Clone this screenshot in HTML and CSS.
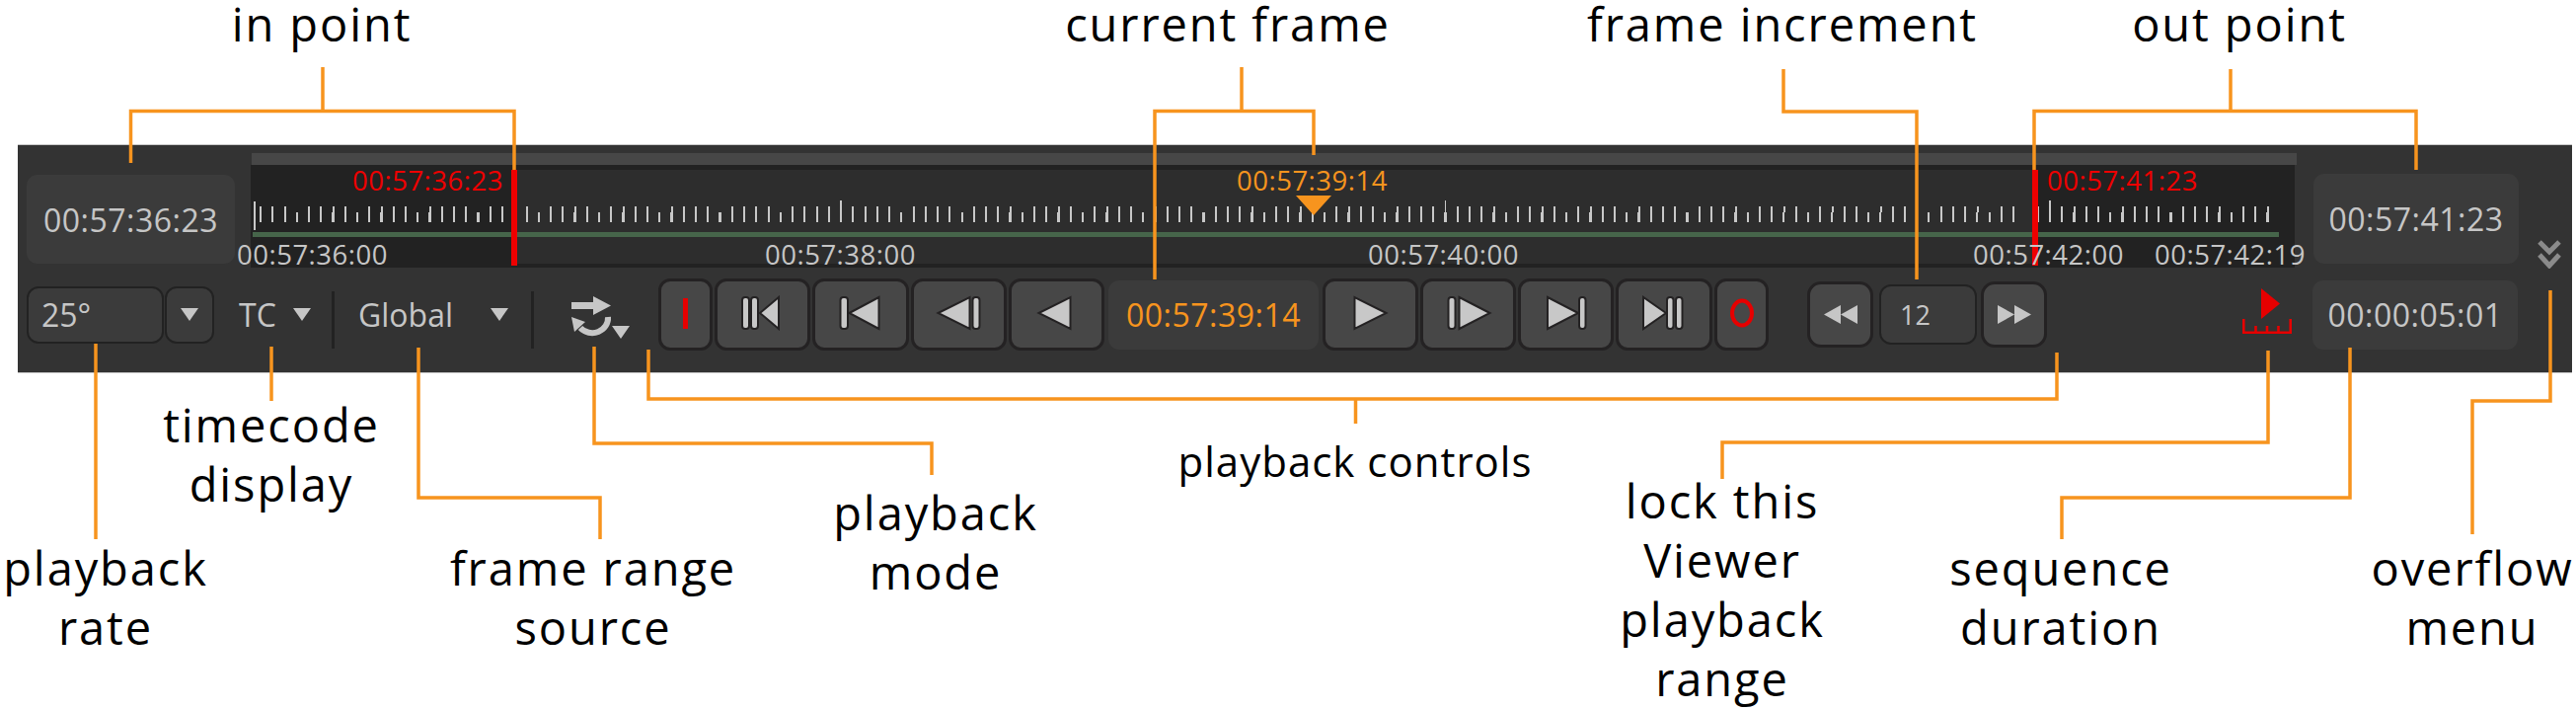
FILE: index.html
```html
<!DOCTYPE html>
<html lang="en">
<head>
<meta charset="utf-8">
<title>Viewer timeline controls</title>
<link rel="stylesheet" href="styles.css">
</head>
<body>
<div class="canvas">
  <div class="panel">
    <div class="top-row">
      <div class="tc-box in-box">00:57:36:23</div>
      <div class="timeline">
        <div class="scrub"></div>
        <div class="track">
          <div class="range"></div>
          <div class="first-tick"></div>
          <div class="ticks"></div>
          <div class="green"></div>
          <div class="bar in-bar"></div>
          <div class="bar out-bar"></div>
          <div class="playhead"></div>
          <span class="tl tl-top red t-in">00:57:36:23</span>
          <span class="tl tl-top red t-out">00:57:41:23</span>
          <span class="tl tl-top orange t-cur">00:57:39:14</span>
          <span class="tl tl-bot t-36">00:57:36:00</span>
          <span class="tl tl-bot t-38">00:57:38:00</span>
          <span class="tl tl-bot t-40">00:57:40:00</span>
          <span class="tl tl-bot t-42">00:57:42:00</span>
          <span class="tl tl-bot t-4219">00:57:42:19</span>
        </div>
      </div>
      <div class="tc-box out-box">00:57:41:23</div>
      <svg class="chevrons" width="24" height="29" viewBox="0 0 24 29"><path d="M2 2l10 10L22 2M2 15l10 11 10-11" fill="none" stroke="#8b8b8b" stroke-width="5"/></svg>
    </div>
    <div class="bottom-row">
      <div class="field rate">25°</div>
      <div class="field rate-drop"><i class="caret"></i></div>
      <span class="menu-text tc-text">TC</span>
      <i class="caret tc-caret"></i>
      <i class="sep sep-a"></i>
      <span class="menu-text global-text">Global</span>
      <i class="caret global-caret"></i>
      <i class="sep sep-b"></i>
      <svg class="loop" width="59" height="43" viewBox="0 0 59 43">
        <path d="M0 6h22V0l18 9.500L22 19v-6H0z" fill="#c6c6c6"/>
        <path d="M37 21A16 15 0 0 1 9 32" fill="none" stroke="#c6c6c6" stroke-width="6"/>
        <path d="M0 21l14 5-11 10zM41 30h18l-9 13z" fill="#c6c6c6"/>
      </svg>
      <div class="transport">
        <button class="btn btn-mark"><i class="i-mark"></i></button>
        <button class="btn"><svg class="icon" width="48" height="36" viewBox="0 0 48 36"><rect x="3" y="2" width="7" height="32" rx="3"/><rect x="12" y="2" width="7" height="32" rx="3"/><path d="M21 18L40 2v32z"/></svg></button>
        <button class="btn btn-98"><svg class="icon" width="48" height="36" viewBox="0 0 48 36"><rect x="3.500" y="2" width="7.500" height="32" rx="3"/><path d="M12.500 18L42.500 2v32z"/></svg></button>
        <button class="btn"><svg class="icon" width="48" height="36" viewBox="0 0 48 36"><path d="M2.500 18L34.500 2v32z"/><rect x="37.500" y="2" width="7" height="32" rx="3"/></svg></button>
        <button class="btn"><svg class="icon" width="48" height="36" viewBox="0 0 48 36"><path d="M5.500 18L37.500 2v32z"/></svg></button>
        <div class="tc-box cur-box orange">00:57:39:14</div>
        <button class="btn"><svg class="icon" width="48" height="36" viewBox="0 0 48 36"><path d="M39.500 18L7.500 2v32z"/></svg></button>
        <button class="btn"><svg class="icon" width="48" height="36" viewBox="0 0 48 36"><rect x="3.500" y="2" width="7" height="32" rx="3"/><path d="M45.500 18L14.500 2v32z"/></svg></button>
        <button class="btn"><svg class="icon" width="48" height="36" viewBox="0 0 48 36"><path d="M36 18L5 2v32z"/><rect x="37" y="2" width="6.500" height="32" rx="3"/></svg></button>
        <button class="btn btn-98"><svg class="icon" width="48" height="36" viewBox="0 0 48 36"><path d="M26 18L3 2v32z"/><rect x="27" y="2" width="6.500" height="32" rx="3"/><rect x="36" y="2" width="6.500" height="32" rx="3"/></svg></button>
        <button class="btn btn-mark"><svg class="o-mark" width="26" height="32" viewBox="0 0 26 32"><ellipse cx="13" cy="16" rx="10" ry="12.500" fill="none" stroke="#e60000" stroke-width="4"/></svg></button>
      </div>
      <button class="btn btn-skip rew"><svg width="34" height="19" viewBox="0 0 34 19"><path d="M0 9.500L17 0v19zM17 9.500L34 0v19z" fill="#c6c6c6"/></svg></button>
      <div class="field incr">12</div>
      <button class="btn btn-skip ff"><svg width="34" height="19" viewBox="0 0 34 19"><path d="M34 9.500L17 0v19zM17 9.500L0 0v19z" fill="#c6c6c6"/></svg></button>
      <svg class="lock" width="50" height="46" viewBox="0 0 50 46">
        <path d="M19 0l19 15.500L19 31z" fill="#e60000"/>
        <path d="M1.300 31v13.700h47.400V31M13.500 38v6M25 38v6M36.500 38v6" fill="none" stroke="#e60000" stroke-width="2.600"/>
      </svg>
      <div class="tc-box dur-box">00:00:05:01</div>
    </div>
  </div>

  <svg class="callouts" width="2610" height="719" viewBox="0 0 2610 719">
    <g fill="none" stroke="#f7941e" stroke-width="3.500">
      <path d="M132.500 165V112.500H521V172M327 68v44"/>
      <path d="M1170 283V112.500H1331V157M1258 68v44"/>
      <path d="M1807 70v43H1942V283"/>
      <path d="M2061 172V112.500H2448V172M2260 70v42"/>
      <path d="M97 348V546"/>
      <path d="M275 351V406"/>
      <path d="M424 352V504H608V546"/>
      <path d="M602 351V449H944V481"/>
      <path d="M657 354V404H2084V357M1373.500 404V429"/>
      <path d="M2298 355V448H1745V485"/>
      <path d="M2381 352V504H2089V546"/>
      <path d="M2584 294V406H2505V541"/>
    </g>
  </svg>

  <div class="label label-top l-in">in point</div>
  <div class="label label-top l-cur">current frame</div>
  <div class="label label-top l-inc">frame increment</div>
  <div class="label label-top l-out">out point</div>
  <div class="label l-rate">playback<br>rate</div>
  <div class="label l-tc">timecode<br>display</div>
  <div class="label l-src">frame range<br>source</div>
  <div class="label l-mode">playback<br>mode</div>
  <div class="label l-ctl">playback controls</div>
  <div class="label l-lock">lock this<br>Viewer<br>playback<br>range</div>
  <div class="label l-seq">sequence<br>duration</div>
  <div class="label l-ovf">overflow<br>menu</div>
</div>
</body>
</html>
```
FILE: styles.css
```css
* { box-sizing: border-box; }
html, body { margin: 0; background: #fff; }
body { font-family: "Open Sans", "Liberation Sans", sans-serif; }

.canvas {
  position: relative;
  width: 2610px;
  height: 719px;
  overflow: hidden;
  padding: 146px 4px 0 18px;
}

.panel {
  display: flex;
  flex-direction: column;
  height: 232px;
  padding: 8px 0 0 9px;
  background: #333;
  border-top: 1px solid #c8c8c8;
  border-bottom: 1px solid #c8c8c8;
  color: #c6c6c6;
}

.top-row { display: flex; height: 116px; }
.bottom-row { display: flex; align-items: center; height: 73px; margin-top: 11px; }

.tc-box {
  display: flex;
  align-items: center;
  justify-content: center;
  background: #3b3b3b;
  border-radius: 11px;
  font-size: 32px;
  letter-spacing: .5px;
  white-space: nowrap;
}
.in-box { width: 211px; height: 90px; margin-top: 22px; }
.out-box { width: 208px; height: 91px; margin: 21px 0 0 17px; }
.cur-box { width: 213px; height: 70px; margin: 0 2px; }
.dur-box { width: 208px; height: 70px; margin-left: 21px; }
.orange { color: #f7941e; }
.red { color: #ee0000; }

.chevrons { margin: 88px 0 0 19px; }

.timeline { width: 2073px; margin-left: 16px; }
.scrub { height: 12px; margin-left: 1px; background: #474747; }
.track { position: relative; width: 2071px; height: 104px; background: #222; }
.range { position: absolute; left: 264px; top: 5px; width: 1546px; height: 95px; background: #2d2d2d; }
.first-tick { position: absolute; left: 3px; top: 37px; width: 2px; height: 29px; background: #c8c8c8; }
.ticks {
  position: absolute;
  left: 9px;
  top: 36px;
  width: 2036px;
  height: 22px;
  background:
    repeating-linear-gradient(90deg, transparent 0 588px, #c8c8c8 588px 590px, transparent 590px 612.5px) 0 0 / 100% 12px no-repeat,
    repeating-linear-gradient(90deg, #c8c8c8 0 2px, transparent 2px 12.25px, #c8c8c8 12.25px 14.25px, transparent 14.25px 24.5px, #c8c8c8 24.5px 26.5px, transparent 26.5px 49px, #c8c8c8 49px 51px, transparent 51px 61.25px) 0 6px / 100% 6px no-repeat,
    repeating-linear-gradient(90deg, #c8c8c8 0 2px, transparent 2px 12.25px) 0 12px / 100% 10px no-repeat;
}
.green { position: absolute; left: 2px; top: 68px; width: 2053px; height: 5px; background: #46654a; }
.bar { position: absolute; top: 5px; width: 6px; height: 97px; background: #ee0000; }
.in-bar { left: 264px; }
.out-bar { left: 1805px; }
.in-bar::after { content: ""; position: absolute; left: 6px; top: 31px; width: 9px; height: 22px; background: #2d2d2d; }
.out-bar::before { content: ""; position: absolute; left: -15px; top: 31px; width: 15px; height: 22px; background: #2d2d2d; }
.playhead {
  position: absolute;
  left: 1059px;
  top: 31px;
  width: 0;
  height: 0;
  border-left: 18.500px solid transparent;
  border-right: 18.500px solid transparent;
  border-top: 20px solid #f7941e;
}
.tl { position: absolute; font-size: 27.500px; line-height: 26px; letter-spacing: .5px; white-space: nowrap; }
.tl-top { top: 3px; }
.tl-bot { top: 78px; }
.t-in { left: 103px; }
.t-out { left: 1820px; }
.t-cur { left: 999px; }
.t-36 { left: -14px; }
.t-38 { left: 521px; }
.t-40 { left: 1132px; }
.t-42 { left: 1745px; }
.t-4219 { left: 1929px; }

.field {
  display: flex;
  align-items: center;
  justify-content: center;
  height: 58px;
  background: #3b3b3b;
  border: 2px solid #222;
  border-radius: 12px;
  font-size: 32px;
}
.rate { width: 139px; justify-content: flex-start; padding-left: 13px; }
.rate-drop { width: 50px; margin-left: 1px; }
.incr { width: 99px; height: 61px; margin-left: 6px; justify-content: flex-start; padding-left: 19px; font-size: 27px; }

.caret {
  display: block;
  width: 0;
  height: 0;
  border-left: 9.500px solid transparent;
  border-right: 9.500px solid transparent;
  border-top: 13px solid #c6c6c6;
}
.menu-text { font-size: 32px; white-space: nowrap; }
.tc-text { width: 38px; margin-left: 25px; }
.tc-caret { margin-left: 17px; }
.global-text { width: 97px; margin-left: 24px; }
.global-caret { margin-left: 37px; }
.sep { display: block; width: 3px; height: 58px; margin-top: 10px; background: #222; }
.sep-a { margin-left: 21px; }
.sep-b { margin-left: 23px; }
.loop { flex: none; margin: 6px 0 0 38px; }

.transport { display: flex; align-items: center; gap: 2px; margin-left: 29px; }
.btn {
  display: flex;
  align-items: center;
  justify-content: center;
  flex: none;
  width: 97px;
  height: 73px;
  padding: 0;
  background: #474747;
  border: 3px solid #242223;
  border-radius: 12px;
}
.btn-98 { width: 98px; }
.btn-mark { width: 55px; }
.btn-skip { width: 67px; height: 67px; border-radius: 14px; }
.rew { margin-left: 39px; }
.ff { margin-left: 4px; }
.icon { margin-bottom: 4px; fill: #c8c8c8; stroke: #242223; stroke-width: 2; }
.i-mark { display: block; width: 5px; height: 31px; margin-bottom: 3px; background: #e60000; }
.o-mark { margin-bottom: 3px; }
.lock { flex: none; margin: 0 0 8px 198px; }

.callouts { position: absolute; left: 0; top: 0; pointer-events: none; }

.label {
  position: absolute;
  transform: translateX(-50%);
  font-size: 47px;
  line-height: 60px;
  letter-spacing: 1.900px;
  text-align: center;
  white-space: nowrap;
  color: #000;
}
.label-top { top: 0; line-height: 48px; }
.l-in { left: 326px; }
.l-cur { left: 1244px; }
.l-inc { left: 1806px; }
.l-out { left: 2269px; }
.l-rate { left: 107px; top: 545px; }
.l-tc { left: 275px; top: 400px; }
.l-src { left: 601px; top: 545px; }
.l-mode { left: 948px; top: 489px; }
.l-ctl { left: 1373px; top: 437px; font-size: 42px; letter-spacing: 1px; }
.l-lock { left: 1745px; top: 477px; }
.l-seq { left: 2088px; top: 545px; }
.l-ovf { left: 2505px; top: 545px; }
```
